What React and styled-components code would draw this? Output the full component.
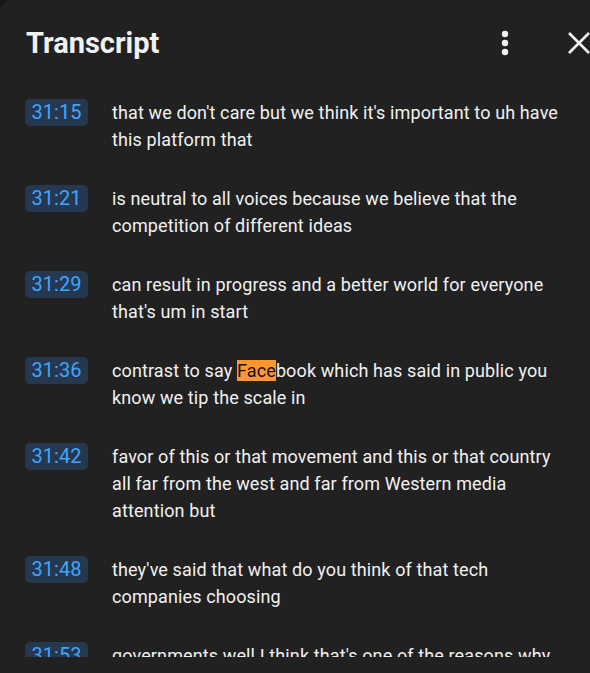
import React from "react";
import styled, { createGlobalStyle } from "styled-components";

const GlobalStyle = createGlobalStyle`
  html, body {
    margin: 0;
    padding: 0;
    background: #181818;
    overflow: hidden;
  }
  body {
    font-family: Roboto, "Liberation Sans", Arial, sans-serif;
  }
`;

const Panel = styled.div`
  width: 620px;
  height: 673px;
  background: #212121;
  border-top-left-radius: 12px;
  display: flex;
  flex-direction: column;
  box-sizing: border-box;
  padding-bottom: 16px;
`;

const Header = styled.div`
  height: 86px;
  flex-shrink: 0;
  display: flex;
  align-items: center;
  padding-left: 26px;
  padding-right: 29px;
`;

const Title = styled.h2`
  margin: 0;
  flex: 1;
  font-size: 29px;
  font-weight: 700;
  color: #f1f1f1;
`;

const IconButton = styled.button`
  background: none;
  border: none;
  padding: 0;
  margin-left: ${(p) => p.$gap || 0}px;
  color: #f1f1f1;
  display: flex;
  align-items: center;
  justify-content: center;
  cursor: pointer;
`;

const List = styled.div`
  flex: 1;
  overflow: hidden;
  padding-top: 13px;
`;

const Row = styled.div`
  display: flex;
  align-items: flex-start;
  padding-left: 25px;
  margin-bottom: 32px;
`;

const Stamp = styled.div`
  flex-shrink: 0;
  width: 63px;
  height: 27px;
  border-radius: 5px;
  background: #263850;
  color: #3ea6ff;
  font-size: 20px;
  font-weight: 400;
  line-height: 27px;
  text-align: center;
`;

const Text = styled.div`
  margin-left: 24px;
  width: 456px;
  font-size: 18px;
  line-height: 27px;
  letter-spacing: 0.12px;
  color: #f1f1f1;
`;

const Mark = styled.span`
  background: #ff9632;
  color: #111;
`;

const rows = [
  ["31:15", "that we don't care but we think it's important to uh have this platform that"],
  ["31:21", "is neutral to all voices because we believe that the competition of different ideas"],
  ["31:29", "can result in progress and a better world for everyone that's um in start"],
  ["31:36", null],
  ["31:42", "favor of this or that movement and this or that country all far from the west and far from Western media attention but"],
  ["31:48", "they've said that what do you think of that tech companies choosing"],
  ["31:53", "governments well I think that's one of the reasons why we exist"],
];

export default function App() {
  return (
    <>
      <GlobalStyle />
      <Panel>
        <Header>
          <Title>Transcript</Title>
          <IconButton aria-label="More">
            <svg width="8" height="26" viewBox="0 0 8 26">
              <circle cx="4" cy="4" r="3.2" fill="#f1f1f1" />
              <circle cx="4" cy="13" r="3.2" fill="#f1f1f1" />
              <circle cx="4" cy="22" r="3.2" fill="#f1f1f1" />
            </svg>
          </IconButton>
          <IconButton aria-label="Close" $gap={58}>
            <svg width="24" height="24" viewBox="0 0 24 24">
              <path d="M2 2 L22 22 M22 2 L2 22" stroke="#f1f1f1" strokeWidth="2.6" fill="none" />
            </svg>
          </IconButton>
        </Header>
        <List>
          {rows.map(([time, text]) => (
            <Row key={time}>
              <Stamp>{time}</Stamp>
              <Text>
                {text ?? (
                  <>
                    contrast to say <Mark>Face</Mark>book which has said in public you know we tip the scale in
                  </>
                )}
              </Text>
            </Row>
          ))}
        </List>
      </Panel>
    </>
  );
}
